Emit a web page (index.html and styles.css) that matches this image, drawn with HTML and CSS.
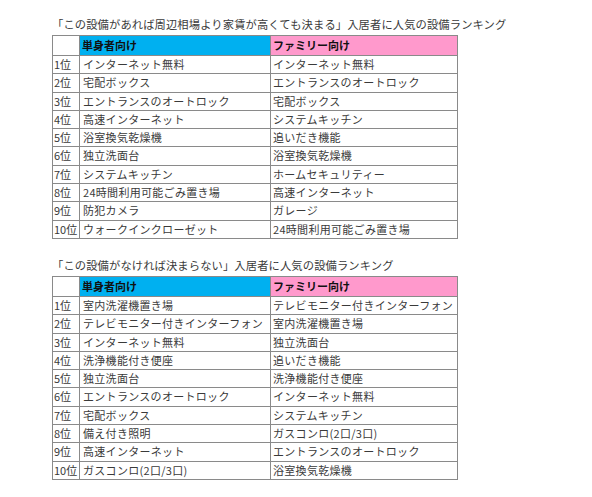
FILE: index.html
```html
<!DOCTYPE html>
<html lang="ja">
<head>
<meta charset="utf-8">
<link rel="stylesheet" href="styles.css">
</head>
<body>
<div class="page">
  <section class="block">
    <p class="title">「この設備があれば周辺相場より家賃が高くても決まる」入居者に人気の設備ランキング</p>
    <table class="rank">
      <colgroup><col class="c-rank"><col class="c-single"><col class="c-family"></colgroup>
      <thead>
        <tr><th class="blank"></th><th class="h-single">単身者向け</th><th class="h-family">ファミリー向け</th></tr>
      </thead>
      <tbody>
        <tr><td>1位</td><td>インターネット無料</td><td>インターネット無料</td></tr>
        <tr><td>2位</td><td>宅配ボックス</td><td>エントランスのオートロック</td></tr>
        <tr><td>3位</td><td>エントランスのオートロック</td><td>宅配ボックス</td></tr>
        <tr><td>4位</td><td>高速インターネット</td><td>システムキッチン</td></tr>
        <tr><td>5位</td><td>浴室換気乾燥機</td><td>追いだき機能</td></tr>
        <tr><td>6位</td><td>独立洗面台</td><td>浴室換気乾燥機</td></tr>
        <tr><td>7位</td><td>システムキッチン</td><td>ホームセキュリティー</td></tr>
        <tr><td>8位</td><td>24時間利用可能ごみ置き場</td><td>高速インターネット</td></tr>
        <tr><td>9位</td><td>防犯カメラ</td><td>ガレージ</td></tr>
        <tr><td>10位</td><td>ウォークインクローゼット</td><td>24時間利用可能ごみ置き場</td></tr>
      </tbody>
    </table>
  </section>
  <section class="block second">
    <p class="title">「この設備がなければ決まらない」入居者に人気の設備ランキング</p>
    <table class="rank">
      <colgroup><col class="c-rank"><col class="c-single"><col class="c-family"></colgroup>
      <thead>
        <tr><th class="blank"></th><th class="h-single">単身者向け</th><th class="h-family">ファミリー向け</th></tr>
      </thead>
      <tbody>
        <tr><td>1位</td><td>室内洗濯機置き場</td><td>テレビモニター付きインターフォン</td></tr>
        <tr><td>2位</td><td>テレビモニター付きインターフォン</td><td>室内洗濯機置き場</td></tr>
        <tr><td>3位</td><td>インターネット無料</td><td>独立洗面台</td></tr>
        <tr><td>4位</td><td>洗浄機能付き便座</td><td>追いだき機能</td></tr>
        <tr><td>5位</td><td>独立洗面台</td><td>洗浄機能付き便座</td></tr>
        <tr><td>6位</td><td>エントランスのオートロック</td><td>インターネット無料</td></tr>
        <tr><td>7位</td><td>宅配ボックス</td><td>システムキッチン</td></tr>
        <tr><td>8位</td><td>備え付き照明</td><td>ガスコンロ(2口/3口)</td></tr>
        <tr><td>9位</td><td>高速インターネット</td><td>エントランスのオートロック</td></tr>
        <tr><td>10位</td><td>ガスコンロ(2口/3口)</td><td>浴室換気乾燥機</td></tr>
      </tbody>
    </table>
  </section>
</div>
</body>
</html>
```

FILE: styles.css
```css
html, body {
  margin: 0;
  padding: 0;
  background: #ffffff;
}

.page {
  padding: 15px 0 0 52px;
  font-family: "Noto Sans CJK JP", "Noto Sans", sans-serif;
  color: #3a3a3a;
}

.block.second {
  margin-top: 17px;
}

.title {
  margin: 0 0 2px 0;
  font-size: 11.3px;
  line-height: 18px;
  letter-spacing: 0.1px;
  color: #3a3a3a;
  white-space: nowrap;
}

.rank {
  border-collapse: collapse;
  table-layout: fixed;
  width: 405px;
  font-size: 11px;
}

.c-rank { width: 27px; }
.c-single { width: 191px; }
.c-family { width: 187px; }

.rank th,
.rank td {
  border: 1px solid #8a8a8a;
  padding: 0 0 0 2px;
  text-align: left;
  white-space: nowrap;
  overflow: hidden;
}

.rank th {
  height: 19px;
  line-height: 19px;
  font-weight: 700;
  color: #111111;
  font-size: 11px;
}

.rank td {
  height: 17.3px;
  line-height: 17.3px;
  letter-spacing: 0.3px;
}

.rank td:first-child {
  padding-left: 1px;
  letter-spacing: 0;
}

.rank td:nth-child(2) {
  padding-left: 3px;
}

.h-single { background: #00b0f0; }
.h-family { background: #ff99cc; }
.blank { background: #ffffff; }
```
